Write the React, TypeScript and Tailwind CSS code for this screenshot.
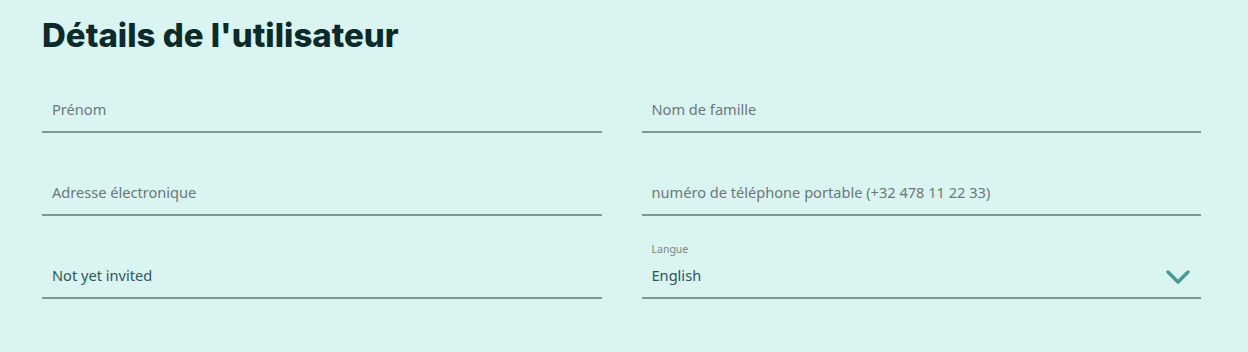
export default function App() {
  const body = { fontFamily: '"Noto Sans", "Open Sans", sans-serif' };
  return (
    <div className="min-h-[352px] w-full bg-[#d9f4f1] px-[42px] pt-[13px]" style={body}>
      <h1
        className="text-[33px] font-extrabold leading-[44px] text-[#0b2a2a]"
        style={{ fontFamily: 'Inter, "Noto Sans", sans-serif' }}
      >
        Détails de l'utilisateur
      </h1>
      <div className="mt-[19px] grid w-[1159px] grid-cols-2 gap-x-[40px] gap-y-[26px]">
        <Field placeholder="Prénom" />
        <Field placeholder="Nom de famille" />
        <Field placeholder="Adresse électronique" />
        <Field placeholder="numéro de téléphone portable (+32 478 11 22 33)" />
        <Field value="Not yet invited" />
        <SelectField label="Langue" value="English" />
      </div>
    </div>
  );
}

function Field({ placeholder, value }: { placeholder?: string; value?: string }) {
  return (
    <div className="flex h-[57px] flex-col justify-end border-b-2 border-[#7f9893] px-[10px] pb-[12px]">
      <span
        className={`text-[14.6px] leading-[20px] ${value ? 'text-[#2d5660]' : 'text-[#6c7877]'}`}
      >
        {value ?? placeholder}
      </span>
    </div>
  );
}

function SelectField({ label, value }: { label: string; value: string }) {
  return (
    <div className="flex h-[57px] items-end justify-between border-b-2 border-[#7f9893] pb-[12px] pl-[10px] pr-[10px]">
      <div className="flex flex-col">
        <span className="text-[10.5px] leading-[14px] text-[#7a8785]">{label}</span>
        <span className="mt-[9px] text-[14.6px] leading-[20px] text-[#2d5660]">{value}</span>
      </div>
      <svg width="26" height="16" viewBox="0 0 26 16" className="mb-[0px]">
        <path d="M3 3 L13 13 L23 3" fill="none" stroke="#4a9a93" strokeWidth="3.5" strokeLinecap="round" strokeLinejoin="round" />
      </svg>
    </div>
  );
}
